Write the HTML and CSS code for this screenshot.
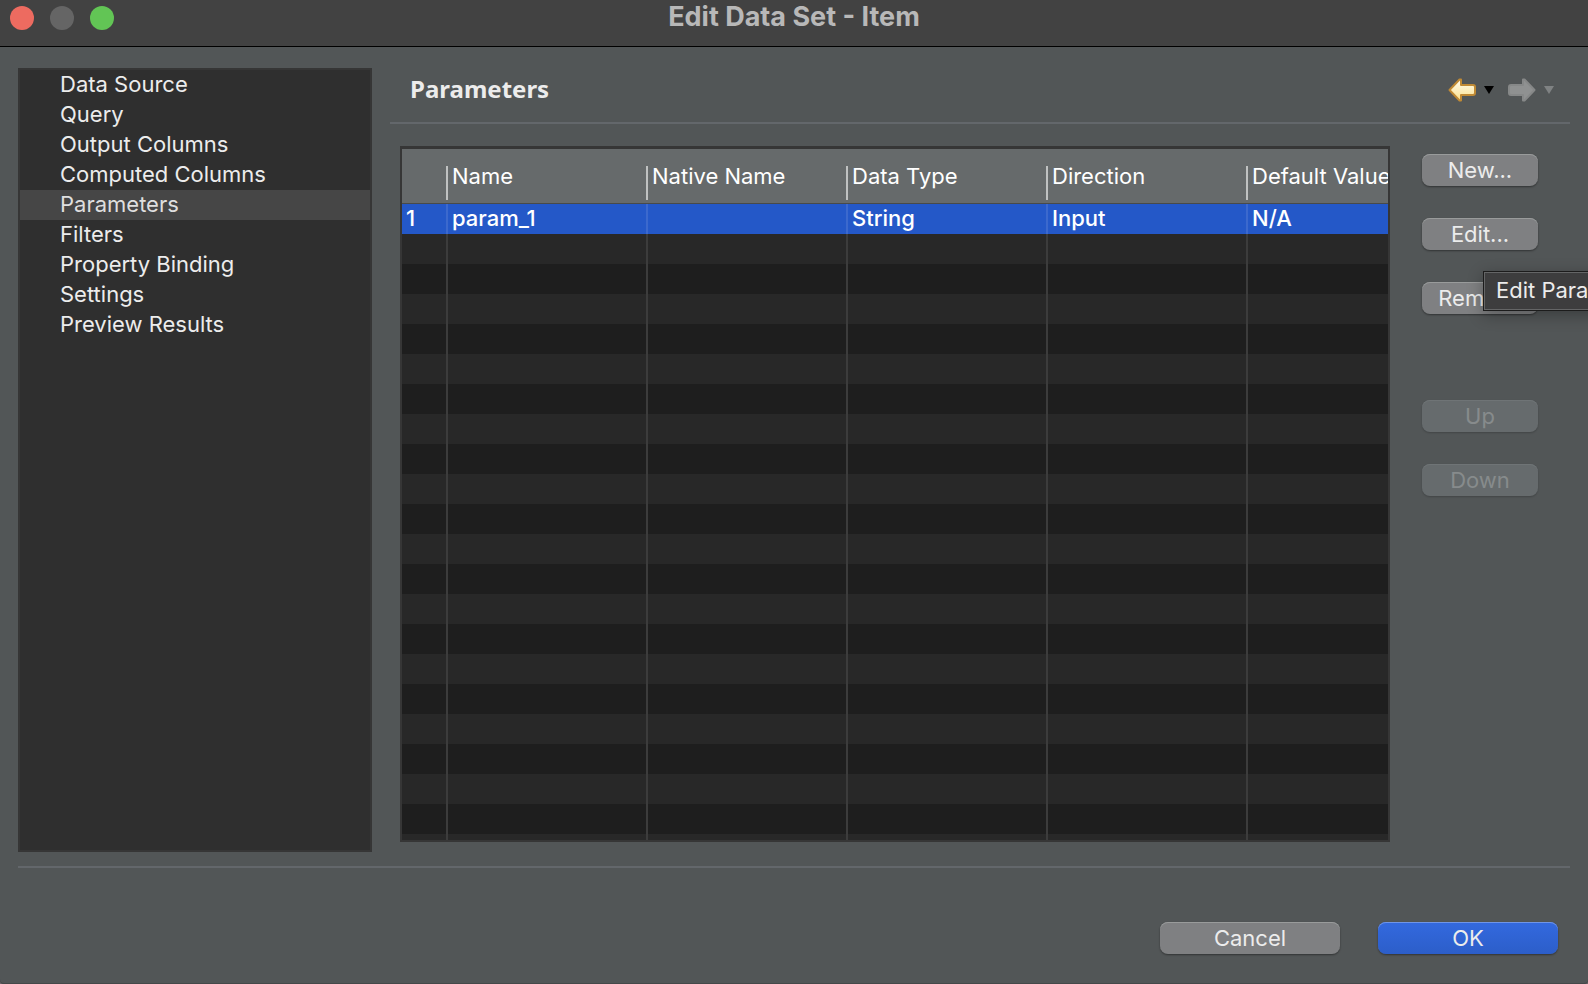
FILE: index.html
```html
<!DOCTYPE html>
<html lang="en">
<head>
<meta charset="utf-8">
<title>Edit Data Set - Item</title>
<link rel="stylesheet" href="styles.css">
</head>
<body>
<div class="dialog">
  <header class="titlebar">
    <div class="lights">
      <button class="light light-close" type="button" aria-label="Close"></button>
      <button class="light light-min" type="button" aria-label="Minimize" disabled></button>
      <button class="light light-zoom" type="button" aria-label="Zoom"></button>
    </div>
    <h1 class="title">Edit Data Set - Item</h1>
  </header>

  <div class="body">
    <nav class="sidebar">
      <a class="nav-item" href="#">Data Source</a>
      <a class="nav-item" href="#">Query</a>
      <a class="nav-item" href="#">Output Columns</a>
      <a class="nav-item" href="#">Computed Columns</a>
      <a class="nav-item nav-item-selected" href="#" aria-current="page">Parameters</a>
      <a class="nav-item" href="#">Filters</a>
      <a class="nav-item" href="#">Property Binding</a>
      <a class="nav-item" href="#">Settings</a>
      <a class="nav-item" href="#">Preview Results</a>
    </nav>

    <main class="page">
      <div class="page-header">
        <h2 class="page-title">Parameters</h2>
        <div class="history">
          <button class="tool" type="button" aria-label="Back">
            <svg width="28" height="26" viewBox="0 0 28 26">
              <defs><linearGradient id="gold" x1="0" y1="0" x2="0" y2="1"><stop offset="0" stop-color="#fffdf0"/><stop offset="1" stop-color="#fbe08c"/></linearGradient></defs>
              <path d="M1.500 13 L11.500 2.500 H13 V8 H25 Q27 8 27 10 V16 Q27 18 25 18 H13 V23.500 H11.500 Z" fill="url(#gold)" stroke="#c08a35" stroke-width="2" stroke-linejoin="round"/>
            </svg>
          </button>
          <button class="tool" type="button" aria-label="Back history">
            <svg width="10" height="8" viewBox="0 0 10 8"><path d="M0 0H10L5 8Z" fill="#000"/></svg>
          </button>
          <button class="tool tool-forward" type="button" aria-label="Forward" disabled>
            <svg width="28" height="26" viewBox="0 0 28 26">
              <path d="M26.500 13 L16.500 2.500 H15 V8 H3 Q1 8 1 10 V16 Q1 18 3 18 H15 V23.500 H16.500 Z" fill="#8f9191" stroke="#868888" stroke-width="2" stroke-linejoin="round"/>
            </svg>
          </button>
          <button class="tool" type="button" aria-label="Forward history" disabled>
            <svg width="10" height="8" viewBox="0 0 10 8"><path d="M0 0H10L5 8Z" fill="#7f8283"/></svg>
          </button>
        </div>
      </div>

      <div class="content">
        <div class="table-box">
          <table class="params">
            <colgroup><col class="col-index"><col class="col-data"><col class="col-data"><col class="col-data"><col class="col-data"><col></colgroup>
            <thead>
              <tr>
                <th></th>
                <th><span class="head">Name</span></th>
                <th><span class="head">Native Name</span></th>
                <th><span class="head">Data Type</span></th>
                <th><span class="head">Direction</span></th>
                <th><span class="head">Default Value</span></th>
              </tr>
            </thead>
            <tbody>
              <tr class="row-selected"><td>1</td><td>param_1</td><td></td><td>String</td><td>Input</td><td>N/A</td></tr>
              <tr class="filler"><td></td><td></td><td></td><td></td><td></td><td></td></tr>
            </tbody>
          </table>
        </div>

        <div class="actions">
          <button class="btn" type="button">New...</button>
          <div class="with-tip">
            <button class="btn" type="button" aria-describedby="edit-tip">Edit...</button>
            <div class="tip" id="edit-tip" role="tooltip">Edit Parameter</div>
          </div>
          <button class="btn" type="button">Remove</button>
          <div class="order">
            <button class="btn" type="button" disabled>Up</button>
            <button class="btn" type="button" disabled>Down</button>
          </div>
        </div>
      </div>
    </main>
  </div>

  <footer class="footer">
    <button class="btn btn-wide" type="button">Cancel</button>
    <button class="btn btn-wide btn-primary" type="button">OK</button>
  </footer>
</div>
</body>
</html>
```
FILE: styles.css
```css
* {
  box-sizing: border-box;
}

body {
  margin: 0;
  overflow: hidden;
  background: #6a6468;
  color: #ececec;
  font: 22px/28px Inter, "Liberation Sans", sans-serif;
}

button {
  margin: 0;
  padding: 0;
  border: 0;
  background: none;
  color: inherit;
  font: inherit;
}

.dialog {
  display: flex;
  flex-direction: column;
  min-height: 100vh;
  overflow: hidden;
  border-radius: 0 0 4px 4px;
  background: #525657;
  box-shadow: inset 0 -1px #454849;
}

.titlebar {
  display: grid;
  grid-template-columns: 1fr auto 1fr;
  height: 47px;
  padding: 0 10px;
  border-bottom: 1px solid #000;
  background: #424242;
}

.lights {
  display: flex;
  gap: 16px;
  padding-top: 6px;
}

.light {
  width: 24px;
  height: 24px;
  border-radius: 50%;
}

.light-close { background: #ed6b60; }
.light-min { background: #656565; }
.light-zoom { background: #62c555; }

.title {
  margin: 0;
  color: #b8b8b8;
  font-size: 27px;
  font-weight: 700;
  line-height: 34px;
}

.body {
  display: grid;
  flex: 1;
  grid-template-columns: 354px 1fr;
  gap: 18px;
  padding: 21px 18px 14px;
}

.sidebar {
  border: 2px solid #363636;
  background: #2f2f2f;
}

.nav-item {
  display: block;
  padding: 0 0 2px 40px;
  color: #ececec;
  text-decoration: none;
}

.nav-item-selected {
  background: #464646;
  color: #dfdfdf;
}

.page {
  display: flex;
  flex-direction: column;
  min-width: 0;
}

.page-header {
  display: flex;
  justify-content: space-between;
  height: 56px;
  padding: 0 16px 0 20px;
  border-bottom: 2px solid #63676b;
}

.page-title {
  margin: 0;
  font: 700 24px/42px "Noto Sans", "Open Sans", sans-serif;
}

.history {
  display: flex;
  align-items: center;
  gap: 8px;
  height: 44px;
}

.tool {
  display: flex;
}

.tool-forward {
  margin-left: 6px;
}

.content {
  display: flex;
  flex: 1;
  gap: 32px;
  padding: 22px 32px 10px 10px;
}

.table-box {
  display: flex;
  flex: 1;
  min-width: 0;
  border: 2px solid #363636;
  border-top-width: 3px;
}

.params {
  width: 100%;
  height: 100%;
  border-spacing: 0;
  color: #fff;
  table-layout: fixed;
}

.col-index { width: 44px; }
.col-data { width: 200px; }

.params th {
  height: 55px;
  padding: 16px 0 3px;
  overflow: hidden;
  border-bottom: 1px solid #484a4a;
  background: #666a6b;
  font-weight: 400;
  text-align: left;
  white-space: nowrap;
}

.head {
  display: block;
  height: 34px;
  padding-left: 4px;
  border-left: 2px solid #bfc1c1;
  line-height: 20px;
}

.params td {
  height: 30px;
  padding: 0 4px 2px;
}

.params td + td {
  border-left: 2px solid #3c3c3c;
}

.row-selected td {
  background: #2458c8;
  font-weight: 500;
}

.params .row-selected td + td {
  border-left-color: #3c69cd;
}

.params .filler td {
  height: auto;
  background: repeating-linear-gradient(#282828 0 30px, #1e1e1e 30px 60px);
}

.actions {
  display: flex;
  flex-direction: column;
  gap: 32px;
  width: 116px;
  padding-top: 8px;
}

.order {
  display: flex;
  flex-direction: column;
  gap: 32px;
  margin-top: 54px;
}

.btn {
  display: block;
  width: 100%;
  height: 32px;
  border-radius: 8px;
  background: #7f8082;
  box-shadow: inset 0 1px #999b9b, 0 1px 2px rgba(0, 0, 0, 0.4);
  line-height: 32px;
}

.btn:disabled {
  background: #666b6d;
  box-shadow: inset 0 1px #6f7476, 0 1px 2px rgba(0, 0, 0, 0.2);
  color: #878b8c;
}

.with-tip {
  position: relative;
}

.tip {
  position: absolute;
  top: 53px;
  left: 61px;
  padding: 4px 12px 6px;
  border: 1px solid #1c1c1c;
  background: #3d3d3e;
  box-shadow: inset 0 0 0 1px #646566, 0 4px 16px rgba(0, 0, 0, 0.3);
  white-space: nowrap;
}

.footer {
  display: flex;
  justify-content: flex-end;
  gap: 38px;
  margin: 0 18px;
  padding: 54px 12px 30px;
  border-top: 2px solid #63676b;
}

.btn-wide {
  width: 180px;
}

.btn-primary {
  background: linear-gradient(#3369df, #2c5ec9);
  box-shadow: inset 0 1px #6f95e8, 0 1px 2px rgba(0, 0, 0, 0.4);
}
```
